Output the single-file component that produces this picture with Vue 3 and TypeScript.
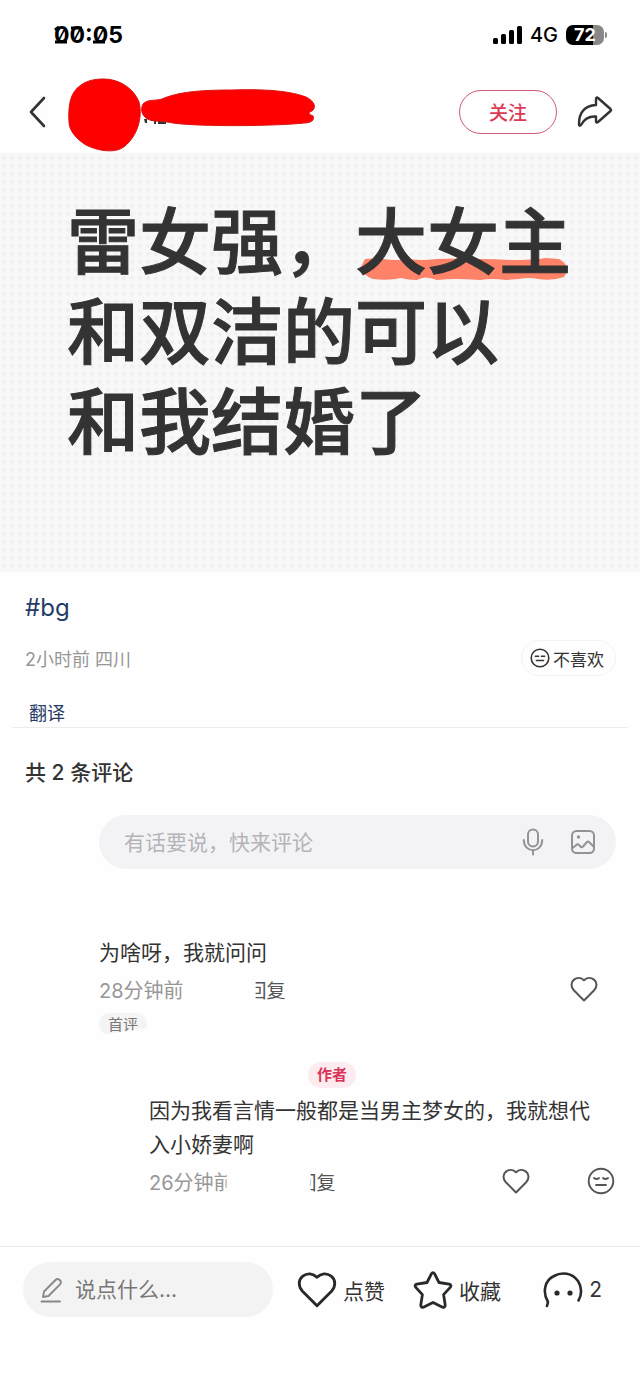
<script setup lang="ts">
import { ref } from 'vue'

interface TitlePart {
  text: string
  marked?: boolean
}

const title: TitlePart[][] = [
  [{ text: '雷女强，' }, { text: '大女主', marked: true }],
  [{ text: '和双洁的可以' }],
  [{ text: '和我结婚了' }],
]

const comment = ref('')
const quick = ref('')
const heart =
  'M14 24.5 L3.8 14.2 C0.6 10.8 0.9 6 4 3.6 C7.1 1.2 11.2 1.5 14 4.4 C16.8 1.5 20.9 1.2 24 3.6 C27.1 6 27.4 10.8 24.2 14.2 Z'
</script>

<template>
  <main class="page">
    <div class="status">
      <div class="clock">
        <span>00:05</span>
        <svg class="clock-marks" viewBox="0 0 70 24" aria-hidden="true">
          <path d="M1 7 L5 4 M1 19 H13 M17 5 H28 M39 19 H51" />
        </svg>
      </div>
      <div class="signals">
        <svg width="29" height="18" viewBox="0 0 29 18" aria-hidden="true">
          <rect x="0" y="12" width="5" height="6" rx="1.500" />
          <rect x="8" y="8" width="5" height="10" rx="1.500" />
          <rect x="16" y="4" width="5" height="14" rx="1.500" />
          <rect x="24" y="0" width="5" height="18" rx="1.500" />
        </svg>
        <span class="network">4G</span>
        <div class="battery"><span>72</span></div>
      </div>
    </div>

    <header class="header">
      <button class="plain" aria-label="返回">
        <svg width="18" height="32" viewBox="0 0 18 32" class="line dark"><path d="M16 2 L3 16 L16 30" stroke-width="2.600" /></svg>
      </button>
      <svg class="scribble" width="250" height="76" viewBox="0 0 250 76" aria-hidden="true">
        <path d="M76 41 h3 v4 h-2 z M83 41 h5 v5 h-2 v-3 h-3 z M90 43 h8 v3 h-8 z" fill="#333" />
        <path
          d="M36 1 C52 1 66 11 71 24 C75 40 69 58 57 68 C48 76 30 73 18 67 C8 61 1 52 1 44 C0 28 2 14 13 7 C20 2 28 1 36 1 Z"
          fill="#fe0000" stroke="#d91512"
        />
        <path
          d="M75 26 C79 21 88 23 94 21 C110 14 132 12 164 12 C190 11 220 12 238 19 C246 23 249 29 244 33 C239 35 241 36 245 38 C247 42 243 45 236 45 C210 48 133 49 105 45 C92 42 81 45 76 38 C73 34 73 30 75 26 Z"
          fill="#fe0000" stroke="#d91512"
        />
      </svg>
      <button class="follow">关注</button>
      <button class="plain share" aria-label="分享">
        <svg width="36" height="32" viewBox="0 0 36 32" class="line dark">
          <path d="M19 3 C19 1.500 20 1 21 2 L33.500 13 Q34.500 14 33.500 15 L21 26 Q19 27.500 19 25 V20.500 C11 20 7 23 4 29 Q2 31 2 28 C2 18 6 10 19 9 Z" stroke-width="2.400" />
        </svg>
      </button>
    </header>

    <section class="hero">
      <h1>
        <span v-for="(row, i) in title" :key="i" class="title-row">
          <span v-for="part in row" :key="part.text" :class="{ marked: part.marked }">
            <svg v-if="part.marked" class="marker" viewBox="0 0 206 22" preserveAspectRatio="none" aria-hidden="true">
              <path d="M4 1 Q12 0 22 1 Q35 3 48 1 Q60 3 75 1 Q98 0 118 1 Q135 1 150 2 Q171 2 185 0 L198 1 Q211 8 203 19 Q192 23 177 21 Q168 19 158 21 L145 22 Q131 20 119 22 Q93 20 76 22 Q63 17 56 22 Q47 22 40 20 Q29 23 12 21 Q1 17 0 9 Z" fill="#fd8267" />
            </svg>
            <span class="glyphs">{{ part.text }}</span>
          </span>
        </span>
      </h1>
    </section>

    <section class="post">
      <a class="topic" href="#bg">#bg</a>
      <div class="meta">
        <span class="grey">2小时前 四川</span>
        <button class="dislike">
          <svg width="20" height="20" viewBox="0 0 28 28" class="line">
            <circle cx="14" cy="14" r="12.300" stroke-width="2.200" />
            <path d="M7.500 11.500 h4.500 M16 11.500 h4.500 M9 17.500 h10" stroke-width="2.200" />
          </svg>
          不喜欢
        </button>
      </div>
      <a class="translate" href="#translate">翻译</a>
    </section>

    <section class="comments">
      <h2>共 2 条评论</h2>
      <div class="composer">
        <input v-model="comment" type="text" aria-label="评论" placeholder="有话要说，快来评论" />
        <button class="plain" aria-label="语音">
          <svg width="22" height="28" viewBox="0 0 22 28" class="line soft">
            <rect x="6" y="1.500" width="10" height="17" rx="5" stroke-width="2" />
            <path d="M1.800 12 C1.800 25.500 20.200 25.500 20.200 12 M11 22.500 V26.500" stroke-width="2" />
          </svg>
        </button>
        <button class="plain" aria-label="图片">
          <svg width="26" height="26" viewBox="0 0 26 26" class="line soft">
            <rect x="2" y="2" width="22" height="22" rx="4.500" stroke-width="2" />
            <circle cx="8.500" cy="8" r="1.700" fill="#929297" stroke="none" />
            <path d="M2.500 19 L7 15.500 Q8 15 9 16 L11 18 Q12 18.500 13 17.500 L17 13 Q18 12 19 13 L23.500 17.500" stroke-width="2" />
          </svg>
        </button>
      </div>

      <article class="comment">
        <p>为啥呀，我就问问</p>
        <div class="info">
          <span class="grey">28分钟前</span>
          <button class="reply cut-a">回复</button>
          <button class="plain like" aria-label="赞"><svg width="28" height="26" viewBox="0 0 28 26" class="line"><path :d="heart" stroke-width="2" /></svg></button>
        </div>
        <span class="first">首评</span>
      </article>

      <article class="comment nested">
        <span class="author">作者</span>
        <p>因为我看言情一般都是当男主梦女的，我就想代入小娇妻啊</p>
        <div class="info">
          <span class="grey cut-time">26分钟前</span>
          <button class="reply cut-b">回复</button>
          <button class="plain like" aria-label="赞"><svg width="28" height="26" viewBox="0 0 28 26" class="line"><path :d="heart" stroke-width="2" /></svg></button>
          <button class="plain" aria-label="不喜欢">
            <svg width="28" height="28" viewBox="0 0 28 28" class="line">
              <circle cx="14" cy="14" r="12.300" stroke-width="1.900" />
              <path d="M7 11 Q9.500 13 12 11 M16 11 Q18.500 13 21 11 M9 18 h10" stroke-width="1.900" />
            </svg>
          </button>
        </div>
      </article>
    </section>

    <footer class="bar">
      <label class="quick">
        <svg width="23" height="26" viewBox="0 0 23 26" class="line pencil">
          <path d="M3 20 L4 14.500 L15.500 3 Q17.500 1 19.700 3 Q22 5 20 7.300 L8.500 19 Z M1.500 24.500 H20" stroke-width="1.900" />
        </svg>
        <input v-model="quick" type="text" aria-label="说点什么" placeholder="说点什么..." />
      </label>
      <div class="actions">
        <button class="action">
          <svg width="40" height="37" viewBox="0 0 28 26" class="line black"><path :d="heart" stroke-width="2" /></svg>
          点赞
        </button>
        <button class="action">
          <svg width="40" height="38" viewBox="0 0 40 38" class="line black">
            <path d="M18.400 2.800 Q20 0.500 21.600 2.800 L26 11.500 L36.200 13.200 Q39 14 37.200 16.400 L30.600 23.600 L32.200 34 Q32.200 37 29.600 36.200 L20 31.500 L10.400 36.200 Q7.800 37 7.800 34 L9.400 23.600 L2.800 16.400 Q1 14 3.800 13.200 L14 11.500 Z" stroke-width="2.800" />
          </svg>
          收藏
        </button>
        <button class="action replies">
          <svg width="40" height="36" viewBox="0 0 40 36" class="line black">
            <path d="M4 34 L5 30 C-1 20 2 8 11 4 C19 -0.500 29 1 35 9 C39 15 39 23 35.500 28.500" stroke-width="2.600" />
            <circle cx="14" cy="21" r="2.600" fill="#292929" stroke="none" />
            <circle cx="27" cy="21" r="2.600" fill="#292929" stroke="none" />
          </svg>
          2
        </button>
      </div>
    </footer>
  </main>
</template>

<style>
body {
  margin: 0;
  background: #fefefe;
}
</style>

<style scoped>
.page {
  font-family: Inter, 'Noto Sans CJK SC', sans-serif;
  color: #333;
  font-size: 21px;
}
button,
input {
  font: inherit;
  color: inherit;
  border: 0;
  padding: 0;
  background: none;
}
button {
  white-space: nowrap;
}
a {
  color: #263b66;
  text-decoration: none;
}
svg {
  display: block;
  flex: none;
}
.plain {
  display: flex;
}
.line {
  fill: none;
  stroke: #555;
  stroke-linecap: round;
  stroke-linejoin: round;
}
.dark {
  stroke: #333;
}
.black {
  stroke: #292929;
}
.soft {
  stroke: #929297;
}
.pencil {
  stroke: #888;
}
.status {
  display: flex;
  align-items: center;
  justify-content: space-between;
  height: 70px;
  padding: 0 36px 0 54px;
  color: #000;
}
.clock {
  position: relative;
  font-size: 23px;
  line-height: 24px;
  font-weight: 700;
  font-feature-settings: 'zero';
}
.clock-marks {
  position: absolute;
  inset: 0;
  width: 70px;
  height: 24px;
  fill: none;
  stroke: #000;
  stroke-width: 3;
}
.signals {
  display: flex;
  align-items: center;
  gap: 8px;
}
.network {
  font-size: 20px;
  font-weight: 500;
}
.battery {
  position: relative;
  width: 38px;
  height: 20px;
  border-radius: 7px;
  background: linear-gradient(90deg, #000 72%, #888 72%);
  color: #fff;
  font-size: 18px;
  line-height: 20px;
  font-weight: 700;
  text-align: center;
}
.battery::after {
  content: '';
  position: absolute;
  right: -3px;
  top: 7px;
  width: 2px;
  height: 6px;
  border-radius: 0 2px 2px 0;
  background: #888;
}
.header {
  display: flex;
  align-items: center;
  height: 83px;
  padding: 0 27px 0 28px;
  border-bottom: 1px solid #f7f7f7;
}
.scribble {
  margin: 8px 0 0 22px;
}
.follow {
  box-sizing: border-box;
  width: 98px;
  height: 44px;
  margin-left: auto;
  border: 1px solid #cf5d75;
  border-radius: 22px;
  color: #dc3b58;
  font-size: 19px;
  font-weight: 500;
}
.share {
  margin-left: 20px;
}
.hero {
  box-sizing: border-box;
  min-height: 418px;
  padding: 43px 60px 100px 67px;
  background: radial-gradient(circle, #efeff0 1px, transparent 3px) 0 0 / 8px 8px #f8f8f8;
}
h1 {
  margin: 0;
  font-size: 72px;
  line-height: 90px;
  font-weight: 500;
  -webkit-text-stroke: 1px #333;
}
.title-row {
  display: block;
  white-space: nowrap;
}
.marked {
  position: relative;
  display: inline-block;
}
.marker {
  position: absolute;
  left: 6px;
  bottom: 7px;
  width: 206px;
  height: 22px;
}
.glyphs {
  position: relative;
}
.post {
  margin: 0 12px;
  padding: 20px 13px 0;
  border-bottom: 1px solid #ececec;
}
.topic {
  display: block;
  font-size: 24px;
  line-height: 32px;
}
.meta {
  display: flex;
  align-items: center;
  justify-content: space-between;
  margin-top: 16px;
  font-size: 18px;
}
.grey {
  color: #979797;
}
.dislike {
  display: flex;
  align-items: center;
  gap: 3px;
  height: 36px;
  margin-right: -1px;
  padding: 0 11px 0 8px;
  border: 1px solid #f3f3f3;
  border-radius: 18px;
  font-size: 17px;
}
.dislike .line {
  stroke: #333;
}
.translate {
  display: block;
  margin-top: 24px;
  padding-left: 4px;
  font-size: 18px;
  line-height: 27px;
}
.comments {
  padding: 30px 24px 0 25px;
}
h2 {
  margin: 0;
  font-size: 21px;
  line-height: 30px;
  font-weight: 500;
}
.composer {
  display: flex;
  align-items: center;
  gap: 26px;
  height: 54px;
  margin: 27px 0 0 74px;
  padding: 0 20px 0 25px;
  border-radius: 27px;
  background: #f3f3f5;
}
.composer input {
  flex: 1;
  min-width: 0;
}
input::placeholder {
  color: #b3b3b8;
  opacity: 1;
}
.comment {
  margin: 67px 0 0 74px;
}
p {
  margin: 0;
  line-height: 34px;
}
.info {
  display: flex;
  align-items: center;
  height: 38px;
  font-size: 20px;
}
.reply {
  margin-left: 64px;
  color: #555;
  font-size: 19px;
}
.cut-a {
  clip-path: inset(0 0 0 8px);
}
.cut-b {
  clip-path: inset(0 0 0 13px);
}
.cut-time {
  clip-path: inset(0 7px 0 0);
}
.like {
  margin-left: auto;
}
.comment .like {
  margin-right: 18px;
}
.first {
  display: block;
  width: 48px;
  height: 22px;
  margin-top: 5px;
  border-radius: 11px;
  background: #f4f4f4;
  color: #777;
  font-size: 15px;
  line-height: 24px;
  text-align: center;
  clip-path: polygon(0 0, 100% 0, 100% 70%, 0 100%);
}
.nested {
  margin: 27px 0 0 124px;
}
.nested p {
  margin-top: 6px;
  margin-right: 8px;
}
.nested .like {
  margin-right: 57px;
}
.nested .info {
  margin-right: 1px;
}
.author {
  display: block;
  width: 48px;
  margin-left: 159px;
  border-radius: 13px;
  background: #fdecef;
  color: #d93458;
  font-size: 15px;
  line-height: 26px;
  font-weight: 700;
  text-align: center;
}
.bar {
  display: flex;
  align-items: center;
  margin-top: 46px;
  padding: 15px 38px 67px 23px;
  border-top: 1px solid #ececec;
}
.quick {
  box-sizing: border-box;
  display: flex;
  align-items: center;
  gap: 12px;
  flex: 0 1 250px;
  min-width: 0;
  height: 55px;
  padding: 0 16px 0 17px;
  border-radius: 28px;
  background: #f3f3f3;
}
.quick input {
  flex: 1;
  min-width: 0;
}
.quick input::placeholder {
  color: #777;
}
.actions {
  display: flex;
  flex: 1;
  gap: 28px;
  margin-left: 24px;
}
.action {
  display: flex;
  align-items: center;
  gap: 6px;
}
.replies {
  margin-left: auto;
}
</style>
